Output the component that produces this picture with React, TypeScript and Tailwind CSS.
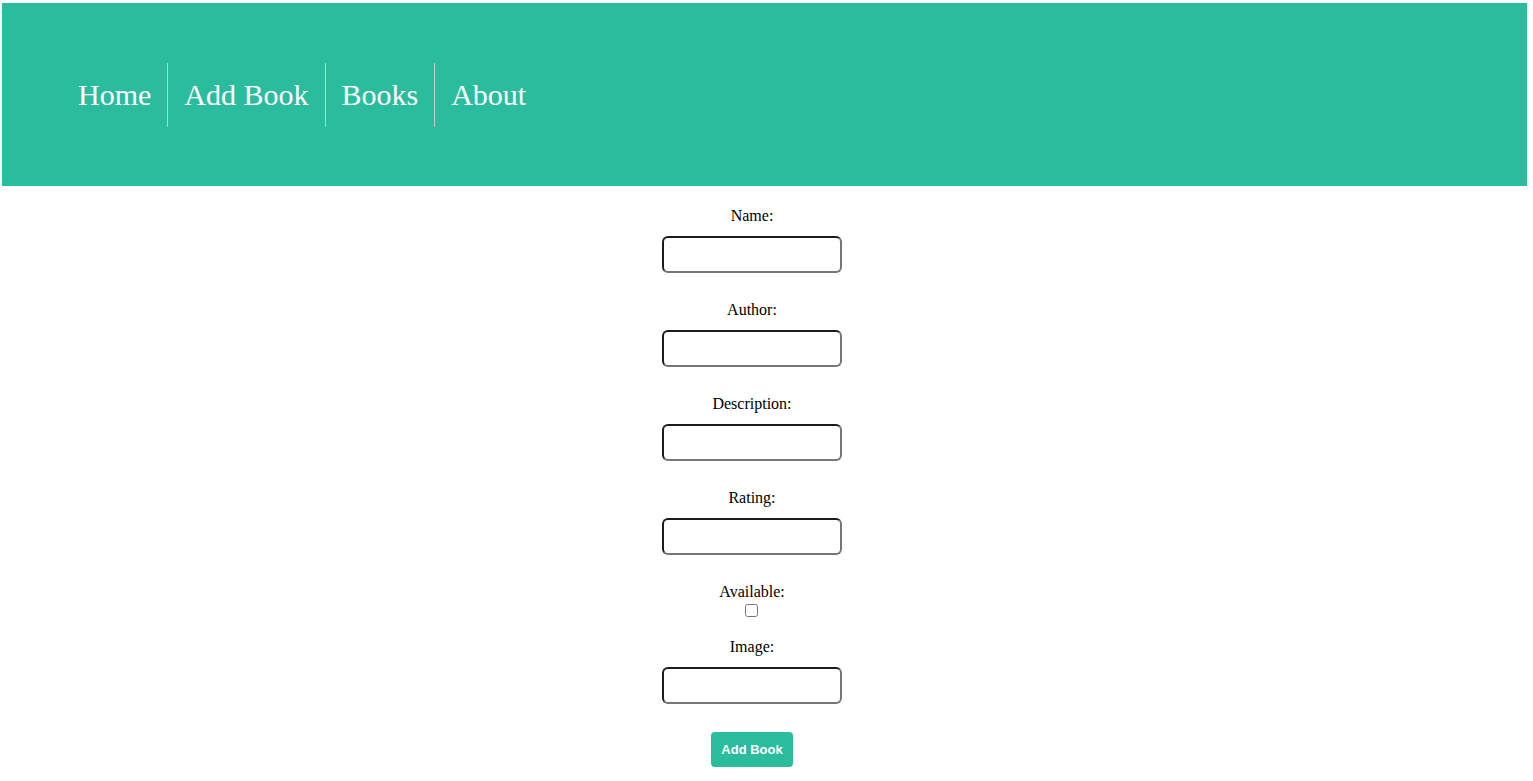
import React from 'react';

const links = ['Home', 'Add Book', 'Books', 'About'];

const Field = ({ label, first }: { label: string; first?: boolean }) => {
    return (
        <div className={`flex flex-col items-center ${first ? 'mt-[21px]' : 'mt-[28px]'}`}>
            <label className="text-[16px] leading-[18px] text-black">{label}</label>
            <input
                type="text"
                className="mt-[11px] w-[180px] h-[37px] rounded-[6px] border-2 border-t-[#1c1c1c] border-l-[#1c1c1c] border-b-[#767676] border-r-[#767676] bg-white px-2 outline-none"
            />
        </div>
    );
};

const App = () => {
    return (
        <div className="min-h-screen bg-white font-['Liberation_Serif',serif]">
            <div className="pt-[3px] pl-[2px] pr-[6px]">
                <header className="h-[183px] bg-[#2bbc9e] flex items-center pl-[60px]">
                    <nav className="flex items-center">
                        {links.map((l, i) => (
                            <a
                                key={l}
                                href="#"
                                className={`h-16 flex items-center px-4 text-[30px] leading-none text-white ${i < links.length - 1 ? 'border-r border-[#c9c9c9]' : ''}`}
                            >
                                {l}
                            </a>
                        ))}
                    </nav>
                </header>
            </div>

            <form className="flex flex-col items-center pr-[29px]">
                <Field label="Name:" first />
                <Field label="Author:" />
                <Field label="Description:" />
                <Field label="Rating:" />

                <div className="flex flex-col items-center mt-[28px]">
                    <label className="text-[16px] leading-[18px] text-black">Available:</label>
                    <input type="checkbox" className="mt-[3px] w-[13px] h-[13px] m-0" />
                </div>

                <div className="flex flex-col items-center mt-[21px]">
                    <label className="text-[16px] leading-[18px] text-black">Image:</label>
                    <input
                        type="text"
                        className="mt-[11px] w-[180px] h-[37px] rounded-[6px] border-2 border-t-[#1c1c1c] border-l-[#1c1c1c] border-b-[#767676] border-r-[#767676] bg-white px-2 outline-none"
                    />
                </div>

                <button
                    type="button"
                    className="mt-[28px] w-[82px] h-[35px] rounded-[4px] bg-[#2bbc9e] text-white font-bold text-[13px] font-['Liberation_Sans',sans-serif]"
                >
                    Add Book
                </button>
            </form>
        </div>
    );
};

export default App;
